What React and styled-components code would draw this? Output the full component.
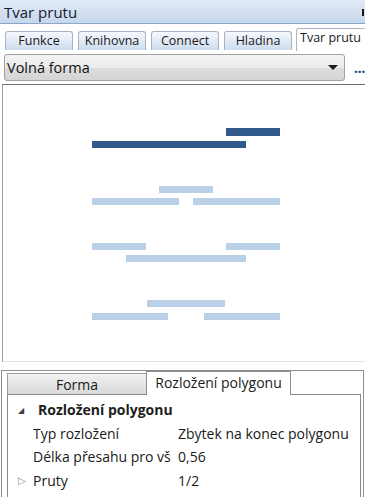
import React from 'react'
import styled, { createGlobalStyle } from 'styled-components'

const GlobalStyle = createGlobalStyle`
    body {
        margin: 0;
        background: #ffffff;
        font-family: "Open Sans", "DejaVu Sans", sans-serif;
        color: #1e1e1e;
    }
`

const topTabs = ['Funkce', 'Knihovna', 'Connect', 'Hladina', 'Tvar prutu']

const darkBars = [
    [226, 127, 54, 8],
    [92, 140, 154, 7],
]

const lightBars = [
    [159, 185, 54, 7],
    [92, 197, 87, 7],
    [193, 197, 87, 7],
    [92, 242, 54, 7],
    [226, 242, 54, 7],
    [126, 254, 120, 7],
    [147, 299, 78, 7],
    [92, 312, 76, 7],
    [204, 312, 76, 7],
]

const props = [
    { name: 'Typ rozložení', value: 'Zbytek na konec polygonu' },
    { name: 'Délka přesahu pro vš', value: '0,56' },
    { name: 'Pruty', value: '1/2', expander: true },
]

function App() {
  return (
    <Page>
        <GlobalStyle />
        <TitleBar>
            <TitleText>Tvar prutu</TitleText>
            <PinMark />
        </TitleBar>

        <TabStrip>
            {topTabs.map((t, i) => (
                <TopTab key={t} active={i === topTabs.length - 1}>{t}</TopTab>
            ))}
        </TabStrip>

        <ComboRow>
            <Combo>
                <ComboText>Volná forma</ComboText>
                <ComboArrow />
            </Combo>
            <Dots>...</Dots>
        </ComboRow>

        <Canvas>
            <svg width="362" height="277" viewBox="3 84 362 277">
                {darkBars.map(([x, y, w, h], i) => (
                    <rect key={'d' + i} x={x} y={y} width={w} height={h} fill="#32598b" />
                ))}
                {lightBars.map(([x, y, w, h], i) => (
                    <rect key={'l' + i} x={x} y={y} width={w} height={h} fill="#b9d0e7" />
                ))}
            </svg>
        </Canvas>

        <BottomPanel>
            <SubTabStrip>
                <SubTab width={140}>Forma</SubTab>
                <SubTab width={145} active>Rozložení polygonu</SubTab>
            </SubTabStrip>
            <PropBox>
                <PropRow>
                    <Expander>◢</Expander>
                    <CategoryName>Rozložení polygonu</CategoryName>
                </PropRow>
                {props.map(p => (
                    <PropRow key={p.name}>
                        <Expander light>{p.expander ? '▷' : ''}</Expander>
                        <PropName>{p.name}</PropName>
                        <PropValue>{p.value}</PropValue>
                    </PropRow>
                ))}
            </PropBox>
        </BottomPanel>
    </Page>
  )
}

export default App

const Page = styled.div`
    width: 365px;
    height: 497px;
    overflow: hidden;
    display: flex;
    flex-direction: column;
    background: #ffffff;
`

const TitleBar = styled.div`
    height: 23px;
    flex-shrink: 0;
    display: flex;
    align-items: center;
    justify-content: space-between;
    padding-left: 4px;
    background: linear-gradient(#e2ebf6, #c6d7ec);
    border-bottom: 1px solid #8aa6c9;
`

const TitleText = styled.div`
    font-size: 15px;
    color: #15202e;
`

const PinMark = styled.div`
    width: 2px;
    height: 7px;
    background: #1a1a1a;
    margin-right: 1px;
    margin-top: 2px;
`

const TabStrip = styled.div`
    height: 27px;
    flex-shrink: 0;
    display: flex;
    align-items: flex-end;
    gap: 5px;
    padding-left: 5px;
    box-sizing: border-box;
`

const TopTab = styled.div`
    width: 68px;
    flex-shrink: 0;
    height: ${p => (p.active ? '23px' : '19px')};
    margin-bottom: ${p => (p.active ? '0' : '1px')};
    box-sizing: border-box;
    border: 1px solid ${p => (p.active ? '#a9b6c6' : '#a7b3c2')};
    border-bottom: none;
    border-radius: 3px 3px 0 0;
    background: ${p => (p.active ? '#ffffff' : 'linear-gradient(#f6f9fd, #cddcee)')};
    font-size: 12.5px;
    line-height: 18px;
    text-align: center;
    color: #1a1a1a;
    white-space: nowrap;
    ${p => p.active && 'width: 72px; margin-left: -1px; text-align: left; padding-left: 3px;'}
`

const ComboRow = styled.div`
    height: 28px;
    flex-shrink: 0;
    margin-top: 2px;
    display: flex;
    align-items: center;
    padding-left: 4px;
`

const Combo = styled.div`
    width: 342px;
    height: 27px;
    box-sizing: border-box;
    border: 1px solid #a2a2a2;
    border-radius: 3px;
    background: linear-gradient(#f3f3f3 0%, #ebebeb 50%, #dcdcdc 51%, #d5d5d5 100%);
    display: flex;
    align-items: center;
    justify-content: space-between;
    padding: 0 6px 0 2px;
`

const ComboText = styled.div`
    font-size: 14.5px;
    color: #111111;
`

const ComboArrow = styled.div`
    width: 0;
    height: 0;
    border-left: 5px solid transparent;
    border-right: 5px solid transparent;
    border-top: 5px solid #1a1a1a;
    margin-top: 1px;
`

const Dots = styled.div`
    margin-left: 9px;
    font-size: 15px;
    font-weight: 700;
    color: #2a4f8a;
    letter-spacing: -0.5px;
    margin-top: 0;
`

const Canvas = styled.div`
    margin-top: 3px;
    margin-left: 2px;
    height: 278px;
    flex-shrink: 0;
    box-sizing: border-box;
    border-top: 1px solid #707070;
    border-left: 1px solid #9a9a9a;
    border-bottom: 1px solid #e3e3e3;
    background: #ffffff;

    svg {
        display: block;
    }
`

const BottomPanel = styled.div`
    flex: 1;
    margin: 8px 1px 0 1px;
    border: 1px solid #8e8e8e;
    border-bottom: none;
    padding: 0 2px 0 5px;
    display: flex;
    flex-direction: column;
`

const SubTabStrip = styled.div`
    height: 23px;
    display: flex;
    align-items: flex-end;
    flex-shrink: 0;
`

const SubTab = styled.div`
    width: ${p => p.width}px;
    height: ${p => (p.active ? '23px' : '21px')};
    box-sizing: border-box;
    border: 1px solid ${p => (p.active ? '#8e8e8e' : '#9c9c9c')};
    border-bottom: none;
    background: ${p => (p.active ? '#ffffff' : 'linear-gradient(#f1f1f1, #d9d9d9)')};
    font-size: 14px;
    line-height: ${p => (p.active ? '21px' : '22px')};
    text-align: center;
    color: #1a1a1a;
    white-space: nowrap;
    ${p => p.active && 'margin-left: -1px; margin-bottom: -1px; height: 24px; position: relative;'}
`

const PropBox = styled.div`
    flex: 1;
    border: 1px solid #8a8a8a;
    border-bottom: none;
    padding-top: 3px;
`

const PropRow = styled.div`
    height: 23.5px;
    display: flex;
    align-items: center;
`

const Expander = styled.div`
    width: 25px;
    flex-shrink: 0;
    padding-left: 10px;
    box-sizing: border-box;
    font-size: ${p => (p.light ? '10px' : '8px')};
    color: ${p => (p.light ? '#8a8a8a' : '#404040')};
`

const CategoryName = styled.div`
    font-size: 14px;
    font-weight: 700;
    margin-left: 5px;
`

const PropName = styled.div`
    width: 145px;
    flex-shrink: 0;
    font-size: 14px;
    white-space: nowrap;
    overflow: hidden;
    color: #1a1a1a;
`

const PropValue = styled.div`
    font-size: 14px;
    white-space: nowrap;
    color: #1a1a1a;
`
